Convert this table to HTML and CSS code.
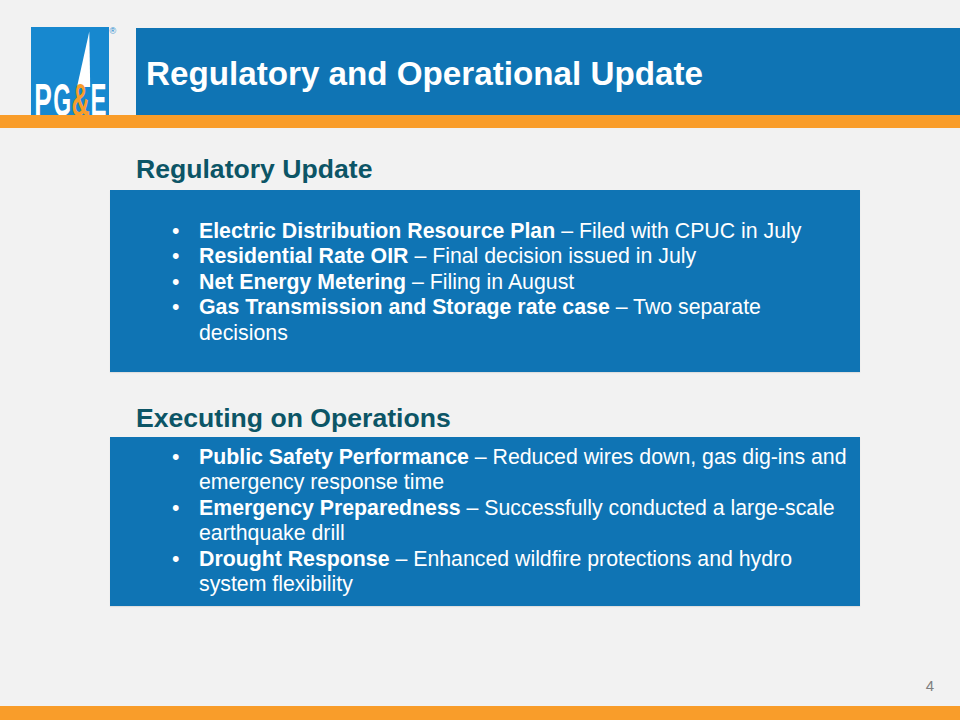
FILE: index.html
```html
<!DOCTYPE html>
<html>
<head>
<meta charset="utf-8">
<title>Regulatory and Operational Update</title>
<link rel="stylesheet" href="styles.css">
</head>
<body>
<div class="slide">
  <header class="header">
    <svg class="logo" width="90" height="88" viewBox="0 0 90 88">
      <defs><clipPath id="lc"><rect x="0" y="0" width="78" height="88"/></clipPath></defs>
      <rect x="0" y="0" width="78" height="88" fill="#1788cf"/>
      <polygon points="58.3,4.5 59.2,60 46,60" fill="#ffffff"/>
      <g clip-path="url(#lc)">
        <text class="logo-text" fill="#ffffff" transform="translate(3.3 89) scale(0.56 1)">P</text>
        <text class="logo-text" fill="#ffffff" transform="translate(22.3 89) scale(0.49 1)">G</text>
        <text class="logo-text" fill="#f99d2a" transform="translate(40.6 89) scale(0.54 1)">&amp;</text>
        <text class="logo-text" fill="#ffffff" transform="translate(59.6 89) scale(0.51 1)">E</text>
      </g>
      <text x="78.5" y="7" class="reg">®</text>
    </svg>
    <div class="title-bar"><h1 class="title">Regulatory and Operational Update</h1></div>
  </header>
  <div class="orange-bar"></div>

  <main class="content">
    <h2 class="section-heading first">Regulatory Update</h2>
    <section class="panel panel-reg">
      <ul class="bullets">
        <li><span class="dot">•</span><span><b>Electric Distribution Resource Plan</b> – Filed with CPUC in July</span></li>
        <li><span class="dot">•</span><span><b>Residential Rate OIR</b> – Final decision issued in July</span></li>
        <li><span class="dot">•</span><span><b>Net Energy Metering</b> – Filing in August</span></li>
        <li><span class="dot">•</span><span><b>Gas Transmission and Storage rate case</b> – Two separate<br>decisions</span></li>
      </ul>
    </section>

    <h2 class="section-heading second">Executing on Operations</h2>
    <section class="panel panel-ops">
      <ul class="bullets">
        <li><span class="dot">•</span><span><b>Public Safety Performance</b> – Reduced wires down, gas dig-ins and<br>emergency response time</span></li>
        <li><span class="dot">•</span><span><b>Emergency Preparedness</b> – Successfully conducted a large-scale<br>earthquake drill</span></li>
        <li><span class="dot">•</span><span><b>Drought Response</b> – Enhanced wildfire protections and hydro<br>system flexibility</span></li>
      </ul>
    </section>
  </main>

  <footer class="footer">
    <div class="page-num">4</div>
    <div class="orange-bar bottom"></div>
  </footer>
</div>
</body>
</html>
```

FILE: styles.css
```css
html, body {
  margin: 0;
  padding: 0;
  background: #f2f2f2;
}

.slide {
  width: 960px;
  height: 720px;
  display: flex;
  flex-direction: column;
  overflow: hidden;
  font-family: "Liberation Sans", Arial, sans-serif;
  background: #f2f2f2;
}

.header {
  display: flex;
  align-items: flex-end;
  padding-top: 27px;
  padding-left: 31px;
  height: 88px;
}

.logo {
  display: block;
  flex: none;
  overflow: visible;
}

.logo-text {
  font-family: "Liberation Sans", Arial, sans-serif;
  font-weight: bold;
  font-size: 47px;
}

.reg {
  font-family: "Liberation Sans", Arial, sans-serif;
  font-size: 9px;
  fill: #1788cf;
}

.title-bar {
  flex: 1;
  height: 87px;
  margin-left: 15px;
  background: #0f74b4;
  display: flex;
  align-items: center;
  padding-left: 10px;
  box-sizing: border-box;
  padding-top: 4px;
}

.title {
  margin: 0;
  color: #ffffff;
  font-size: 33.2px;
  font-weight: bold;
}

.orange-bar {
  height: 13px;
  background: #f99d2a;
}

.content {
  padding-left: 110px;
  width: 750px;
}

.section-heading {
  margin: 0;
  padding-left: 26px;
  font-size: 26.6px;
  line-height: 30px;
  font-weight: bold;
  color: #0c5566;
}

.section-heading.first {
  margin-top: 26px;
}

.section-heading.second {
  margin-top: 31px;
}

.panel {
  background: #0f74b4;
  color: #ffffff;
  box-sizing: border-box;
  box-shadow: 0 1px 1px rgba(0, 0, 0, 0.08);
}

.panel-reg {
  margin-top: 6px;
  height: 182px;
  padding-top: 29px;
}

.panel-ops {
  margin-top: 4px;
  height: 169px;
  padding-top: 8px;
}

.bullets {
  list-style: none;
  margin: 0;
  padding: 0 0 0 62px;
  font-size: 21.3px;
  line-height: 25.4px;
}

.bullets li {
  display: flex;
}

.dot {
  flex: none;
  width: 27px;
}

.footer {
  margin-top: auto;
  display: flex;
  flex-direction: column;
}

.page-num {
  align-self: flex-end;
  padding-right: 26px;
  font-size: 15px;
  line-height: 18px;
  color: #7f7f7f;
  margin-bottom: 11px;
}

.orange-bar.bottom {
  height: 14px;
}
```
